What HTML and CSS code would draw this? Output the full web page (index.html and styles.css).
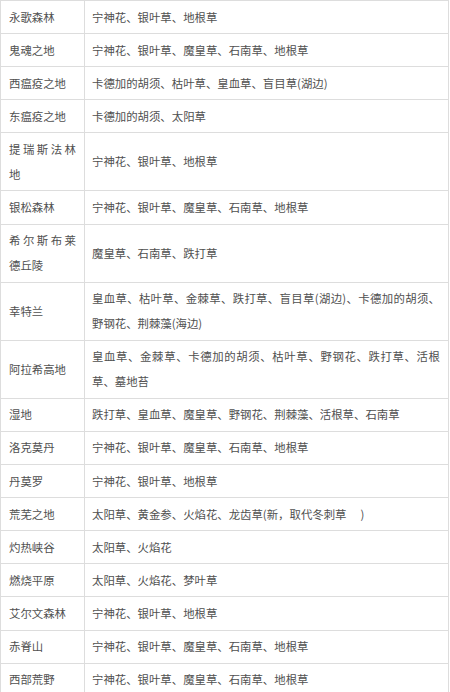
FILE: index.html
```html
<!DOCTYPE html>
<html lang="zh-CN">
<head>
<meta charset="utf-8">
<title>草药分布</title>
<link rel="stylesheet" href="styles.css">
</head>
<body>
<table class="herbs">
<tbody>
<tr><td class="zone">永歌森林</td><td class="list">宁神花、银叶草、地根草</td></tr>
<tr><td class="zone">鬼魂之地</td><td class="list">宁神花、银叶草、魔皇草、石南草、地根草</td></tr>
<tr><td class="zone">西瘟疫之地</td><td class="list">卡德加的胡须、枯叶草、皇血草、盲目草(湖边)</td></tr>
<tr><td class="zone">东瘟疫之地</td><td class="list">卡德加的胡须、太阳草</td></tr>
<tr><td class="zone">提瑞斯法林地</td><td class="list">宁神花、银叶草、地根草</td></tr>
<tr><td class="zone">银松森林</td><td class="list">宁神花、银叶草、魔皇草、石南草、地根草</td></tr>
<tr><td class="zone">希尔斯布莱德丘陵</td><td class="list">魔皇草、石南草、跌打草</td></tr>
<tr><td class="zone">幸特兰</td><td class="list">皇血草、枯叶草、金棘草、跌打草、盲目草(湖边)、卡德加的胡须、野钢花、荆棘藻(海边)</td></tr>
<tr><td class="zone">阿拉希高地</td><td class="list">皇血草、金棘草、卡德加的胡须、枯叶草、野钢花、跌打草、活根草、墓地苔</td></tr>
<tr><td class="zone">湿地</td><td class="list">跌打草、皇血草、魔皇草、野钢花、荆棘藻、活根草、石南草</td></tr>
<tr><td class="zone">洛克莫丹</td><td class="list">宁神花、银叶草、魔皇草、石南草、地根草</td></tr>
<tr><td class="zone">丹莫罗</td><td class="list">宁神花、银叶草、地根草</td></tr>
<tr><td class="zone">荒芜之地</td><td class="list">太阳草、黄金参、火焰花、龙齿草(新，取代冬刺草　 )</td></tr>
<tr><td class="zone">灼热峡谷</td><td class="list">太阳草、火焰花</td></tr>
<tr><td class="zone">燃烧平原</td><td class="list">太阳草、火焰花、梦叶草</td></tr>
<tr><td class="zone">艾尔文森林</td><td class="list">宁神花、银叶草、地根草</td></tr>
<tr><td class="zone">赤脊山</td><td class="list">宁神花、银叶草、魔皇草、石南草、地根草</td></tr>
<tr><td class="zone">西部荒野</td><td class="list">宁神花、银叶草、魔皇草、石南草、地根草</td></tr>
</tbody>
</table>
</body>
</html>
```
FILE: styles.css
```css
html, body {
  margin: 0;
  padding: 0;
  background: #ffffff;
}

body {
  font-family: "Noto Sans CJK SC", "Noto Sans", sans-serif;
  font-size: 11.4px;
  line-height: 25px;
  color: #505050;
}

.herbs {
  border-collapse: separate;
  border-spacing: 0;
  table-layout: fixed;
  width: 449px;
  border-top: 1px solid #dddddd;
  border-left: 1px solid #dddddd;
}

.herbs td {
  vertical-align: middle;
  border-right: 1px solid #dddddd;
  border-bottom: 1px solid #dddddd;
  padding-top: 3.55px;
  padding-bottom: 3.55px;
  text-align: justify;
}

.zone {
  width: 67px;
  padding-left: 8px;
  padding-right: 8px;
}

.list {
  padding-left: 7px;
  padding-right: 8px;
}
```
